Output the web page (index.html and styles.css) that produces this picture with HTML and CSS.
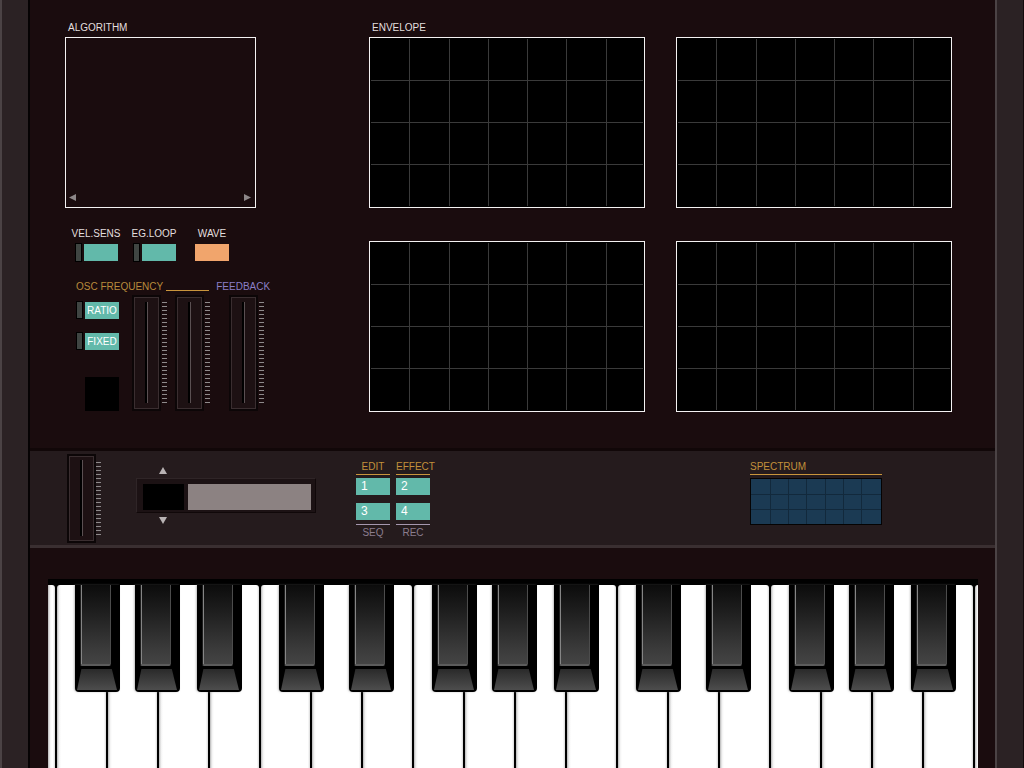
FILE: index.html
```html
<!DOCTYPE html>
<html>
<head>
<meta charset="utf-8">
<title>Synth</title>
<link rel="stylesheet" href="styles.css">
</head>
<body>
<div class="app">
  <div class="side-l"></div>
  <div class="main">
    <section class="top">
      <div class="left-col">
        <div class="cap box-label">ALGORITHM</div>
        <div class="algo">
          <svg class="tri" width="7" height="7" viewBox="0 0 7 7"><polygon points="7,0 7,7 0,3.5"/></svg>
          <svg class="tri" width="7" height="7" viewBox="0 0 7 7"><polygon points="0,0 0,7 7,3.5"/></svg>
        </div>
        <div class="toggles">
          <div class="unit"><div class="cap">VEL.SENS</div><div class="tg"><span class="ind"></span><span class="pad teal"></span></div></div>
          <div class="unit"><div class="cap">EG.LOOP</div><div class="tg"><span class="ind"></span><span class="pad teal"></span></div></div>
          <div class="unit"><div class="cap">WAVE</div><div class="tg"><span class="pad orange"></span></div></div>
        </div>
        <div class="osc-head"><span class="gold">OSC FREQUENCY</span><span class="gold-line"></span><span class="purple">FEEDBACK</span></div>
        <div class="osc-body">
          <div class="btncol">
            <div class="tg ratio"><span class="ind"></span><span class="pad teal">RATIO</span></div>
            <div class="tg fixed"><span class="ind"></span><span class="pad teal">FIXED</span></div>
            <div class="blk"></div>
          </div>
          <div class="slider s1"><div class="frame"><span class="slot"></span></div><div class="ticks"></div></div>
          <div class="slider s2"><div class="frame"><span class="slot"></span></div><div class="ticks"></div></div>
          <div class="slider s3"><div class="frame"><span class="slot"></span></div><div class="ticks"></div></div>
        </div>
      </div>
      <div class="env-col">
        <div class="cap box-label">ENVELOPE</div>
        <div class="env-grid">
          <div class="env"><svg class="grid" width="274" height="169" viewBox="0 0 274 169"><path d="M39.5 1V168M79.5 1V168M118.5 1V168M157.5 1V168M196.5 1V168M236.5 1V168M1 42.5H273M1 84.5H273M1 126.5H273"/></svg></div>
          <div class="env"><svg class="grid" width="274" height="169" viewBox="0 0 274 169"><path d="M39.5 1V168M79.5 1V168M118.5 1V168M157.5 1V168M196.5 1V168M236.5 1V168M1 42.5H273M1 84.5H273M1 126.5H273"/></svg></div>
          <div class="env"><svg class="grid" width="274" height="169" viewBox="0 0 274 169"><path d="M39.5 1V168M79.5 1V168M118.5 1V168M157.5 1V168M196.5 1V168M236.5 1V168M1 42.5H273M1 84.5H273M1 126.5H273"/></svg></div>
          <div class="env"><svg class="grid" width="274" height="169" viewBox="0 0 274 169"><path d="M39.5 1V168M79.5 1V168M118.5 1V168M157.5 1V168M196.5 1V168M236.5 1V168M1 42.5H273M1 84.5H273M1 126.5H273"/></svg></div>
        </div>
      </div>
    </section>
    <div class="sep-dark"></div>
    <section class="panel">
      <div class="slider pslider"><div class="frame"><span class="slot"></span></div><div class="ticks"></div></div>
      <div class="dgroup">
        <svg class="arrow up" width="8" height="7" viewBox="0 0 8 7"><polygon points="4,0 8,7 0,7"/></svg>
        <div class="disp"><div class="d-black"></div><div class="d-gray"></div></div>
        <svg class="arrow down" width="8" height="7" viewBox="0 0 8 7"><polygon points="0,0 8,0 4,7"/></svg>
      </div>
      <div class="egroup">
        <div class="ecol">
          <div class="cap t-gold">EDIT</div>
          <div class="ln-gold"></div>
          <div class="nbtn">1</div>
          <div class="nbtn">3</div>
          <div class="ln-lav"></div>
          <div class="cap t-lav">SEQ</div>
        </div>
        <div class="ecol">
          <div class="cap t-gold">EFFECT</div>
          <div class="ln-gold"></div>
          <div class="nbtn">2</div>
          <div class="nbtn">4</div>
          <div class="ln-lav"></div>
          <div class="cap t-lav">REC</div>
        </div>
      </div>
      <div class="spec">
        <div class="cap t-gold spec-title">SPECTRUM</div>
        <div class="ln-gold"></div>
        <div class="spec-box"><svg class="grid" width="130" height="45" viewBox="0 0 130 45"><path d="M19.5 0V45M37.5 0V45M55.5 0V45M74.5 0V45M92.5 0V45M110.5 0V45M0 15.5H130M0 30.5H130"/></svg></div>
      </div>
    </section>
    <div class="sep-light"></div>
    <section class="kb-area">
      <div class="keyboard">
        <div class="wk p1"></div>
        <div class="wk"></div><div class="wk"></div><div class="wk"></div><div class="wk"></div>
        <div class="wk"></div><div class="wk"></div><div class="wk"></div>
        <div class="wk"></div><div class="wk"></div><div class="wk"></div><div class="wk"></div>
        <div class="wk"></div><div class="wk"></div><div class="wk"></div>
        <div class="wk"></div><div class="wk"></div><div class="wk"></div><div class="wk"></div>
        <div class="wk p2"></div>

        <div class="bk" style="left:27px"><div class="bk-body"></div><div class="bk-front"></div></div>
        <div class="bk" style="left:87px"><div class="bk-body"></div><div class="bk-front"></div></div>
        <div class="bk" style="left:149px"><div class="bk-body"></div><div class="bk-front"></div></div>
        <div class="bk" style="left:231px"><div class="bk-body"></div><div class="bk-front"></div></div>
        <div class="bk" style="left:301px"><div class="bk-body"></div><div class="bk-front"></div></div>
        <div class="bk" style="left:384px"><div class="bk-body"></div><div class="bk-front"></div></div>
        <div class="bk" style="left:444px"><div class="bk-body"></div><div class="bk-front"></div></div>
        <div class="bk" style="left:506px"><div class="bk-body"></div><div class="bk-front"></div></div>
        <div class="bk" style="left:588px"><div class="bk-body"></div><div class="bk-front"></div></div>
        <div class="bk" style="left:658px"><div class="bk-body"></div><div class="bk-front"></div></div>
        <div class="bk" style="left:741px"><div class="bk-body"></div><div class="bk-front"></div></div>
        <div class="bk" style="left:801px"><div class="bk-body"></div><div class="bk-front"></div></div>
        <div class="bk" style="left:863px"><div class="bk-body"></div><div class="bk-front"></div></div>
      </div>
    </section>
  </div>
  <div class="side-r"></div>
</div>
</body>
</html>
```

FILE: styles.css
```css
html, body {
  margin: 0;
  padding: 0;
}
body {
  background: #1a0c0e;
  font-family: "Liberation Sans", Arial, sans-serif;
}
.app {
  display: flex;
  width: 1024px;
  height: 768px;
  overflow: hidden;
}
.side-l {
  width: 30px;
  flex: none;
  box-sizing: border-box;
  border-left: 2px solid #4b4345;
  border-right: 2px solid #050203;
  background: #2b2224;
}
.side-r {
  width: 29px;
  flex: none;
  box-sizing: border-box;
  border-left: 2px solid #4b4345;
  border-right: 1px solid #120a0b;
  background: #2b2224;
}
.main {
  width: 965px;
  flex: none;
  display: flex;
  flex-direction: column;
  background: #1a0c0e;
}

/* ---------- top section ---------- */
.top {
  height: 448px;
  box-sizing: border-box;
  padding: 22px 0 0 35px;
  display: flex;
}
.left-col {
  width: 304px;
  flex: none;
}
.cap {
  font-size: 10px;
  line-height: 12px;
  color: #e3dfdf;
  white-space: nowrap;
}
.box-label {
  padding-left: 3px;
  margin-bottom: 3px;
}
.algo {
  width: 191px;
  height: 171px;
  box-sizing: border-box;
  border: 1px solid #f4f2f2;
  display: flex;
  justify-content: space-between;
  align-items: flex-end;
  padding: 0 4px 6px 3px;
}
.tri {
  display: block;
  fill: #8d8788;
}

.toggles {
  display: flex;
  gap: 10px;
  margin-top: 20px;
  padding-left: 7px;
}
.unit {
  width: 48px;
  display: flex;
  flex-direction: column;
  align-items: center;
  gap: 3px;
}
.tg {
  display: flex;
  align-items: center;
  gap: 2px;
  min-height: 19px;
}
.ind {
  width: 7px;
  height: 19px;
  box-sizing: border-box;
  border: 1px solid #000;
  background: #3f4542;
}
.pad {
  width: 34px;
  height: 17px;
  font-size: 10px;
  line-height: 17px;
  color: #fff;
  text-align: center;
}
.teal { background: #62b9aa; }
.orange { background: #f1a56c; }

.osc-head {
  display: flex;
  margin-top: 19px;
  padding-left: 11px;
  font-size: 10px;
  line-height: 12px;
  white-space: nowrap;
}
.gold { color: #b88a3c; }
.gold-line {
  width: 43px;
  height: 1px;
  background: #c9953c;
  margin: 9px 0 0 3px;
}
.purple {
  color: #8b7fc6;
  margin-left: 7px;
}
.osc-body {
  display: flex;
  align-items: flex-start;
  margin-top: 2px;
  padding-left: 11px;
}
.btncol {
  width: 43px;
  flex: none;
  display: flex;
  flex-direction: column;
}
.btncol .tg { min-height: 18px; }
.btncol .ind { height: 18px; }
.ratio { margin-top: 6px; }
.fixed { margin-top: 13px; }
.blk {
  width: 34px;
  height: 34px;
  background: #000;
  margin: 27px 0 0 9px;
}

.slider {
  display: flex;
  align-items: flex-start;
  flex: none;
}
.s1 { margin-left: 13px; }
.s2 { margin-left: 8px; }
.s3 { margin-left: 19px; }
.frame {
  width: 29px;
  height: 116px;
  box-sizing: border-box;
  border: 2px solid #0c0607;
  box-shadow: inset 0 0 0 1px #3a2e30;
  background: #1d1113;
  display: flex;
  justify-content: center;
}
.slot {
  width: 3px;
  height: 101px;
  margin-top: 5px;
  background: linear-gradient(to right, #000 0, #000 2px, #5a5052 2px);
}
.ticks {
  width: 5px;
  height: 101px;
  margin: 7px 0 0 1px;
  background: repeating-linear-gradient(to bottom, #8e8a8b 0, #8e8a8b 1px, transparent 1px, transparent 4px);
}

.env-col {
  flex: none;
}
.env-grid {
  display: grid;
  grid-template-columns: 276px 276px;
  column-gap: 31px;
  row-gap: 33px;
}
.env {
  width: 276px;
  height: 171px;
  box-sizing: border-box;
  border: 1px solid #f4f2f2;
  background: #000;
}
.grid {
  display: block;
}
.env .grid path {
  stroke: #3a3a3a;
  stroke-width: 1;
  fill: none;
  shape-rendering: crispEdges;
}

/* ---------- middle panel ---------- */
.sep-dark {
  height: 3px;
  background: #110708;
}
.panel {
  height: 94px;
  flex: none;
  background: #251b1d;
  display: flex;
  align-items: flex-start;
  padding-left: 37px;
}
.sep-light {
  height: 3px;
  background: #3a2f31;
}
.pslider { margin-top: 3px; }
.pslider .frame { height: 89px; }
.pslider .slot {
  height: 76px;
  margin-top: 4px;
}
.pslider .ticks {
  height: 73px;
  margin: 8px 0 0 0;
}
.dgroup {
  margin-left: 35px;
  display: flex;
  flex-direction: column;
  flex: none;
}
.arrow {
  display: block;
  fill: #b9b3b4;
  margin-left: 23px;
}
.arrow.up { margin-top: 16px; }
.arrow.down { margin-top: 4px; }
.disp {
  margin-top: 4px;
  width: 180px;
  height: 35px;
  box-sizing: border-box;
  border: 1px solid #100809;
  border-top-color: #2f2527;
  border-left-color: #2f2527;
  background: #1c1214;
  padding: 5px 0 0 6px;
  display: flex;
  gap: 4px;
}
.d-black {
  width: 41px;
  height: 26px;
  background: #000;
}
.d-gray {
  width: 123px;
  height: 26px;
  background: #8c8282;
}
.egroup {
  margin-left: 40px;
  margin-top: 10px;
  display: flex;
  gap: 6px;
  flex: none;
}
.ecol {
  width: 34px;
  display: flex;
  flex-direction: column;
}
.t-gold {
  color: #c2903b;
  text-align: center;
}
.ln-gold {
  height: 1px;
  background: #c9953c;
  margin-top: 1px;
}
.nbtn {
  height: 17px;
  background: #62b9aa;
  color: #fff;
  font-size: 12px;
  line-height: 17px;
  padding-left: 5px;
  margin-top: 3px;
}
.nbtn + .nbtn { margin-top: 8px; }
.ln-lav {
  height: 1px;
  background: #a597ae;
  margin-top: 4px;
}
.t-lav {
  margin-top: 2px;
  text-align: center;
  color: #8b7d8e;
}
.spec {
  margin-left: 320px;
  margin-top: 10px;
  width: 132px;
  flex: none;
}
.spec-title { text-align: left; }
.spec-box {
  margin-top: 3px;
  height: 47px;
  box-sizing: border-box;
  border: 1px solid #050303;
  background: #1b3a53;
}
.spec-box .grid path {
  stroke: #12293c;
  stroke-width: 1;
  fill: none;
  shape-rendering: crispEdges;
}

/* ---------- keyboard ---------- */
.kb-area {
  flex: 1;
  padding: 31px 0 0 18px;
  background: #1a0c0e;
}
.keyboard {
  position: relative;
  width: 930px;
  height: 189px;
  box-sizing: border-box;
  padding-top: 6px;
  background: #000;
  display: flex;
  gap: 2px;
  overflow: hidden;
}
.wk {
  width: 49px;
  height: 183px;
  flex: none;
  border-radius: 3px 3px 0 0;
  background: linear-gradient(to right, #b5b5b5 0, #f2f2f2 2px, #fff 4px, #fff calc(100% - 2px), #d8d8d8 100%);
}
.wk.p1 { width: 7px; border-radius: 0 3px 0 0; }
.wk.p2 { width: 3px; border-radius: 3px 0 0 0; }
.bk {
  position: absolute;
  top: 6px;
  width: 45px;
  height: 107px;
  background: #000;
  border-radius: 0 0 4px 4px;
  box-shadow: -1px 0 2px rgba(140, 140, 140, 0.55);
  display: flex;
  flex-direction: column;
}
.bk-body {
  margin-left: 5px;
  width: 31px;
  height: 81px;
  box-sizing: border-box;
  border-left: 1px solid #1e1e1e;
  border-right: 1px solid #4c4c4c;
  border-bottom: 2px solid #5c5c5c;
  border-radius: 0 0 2px 2px;
  box-shadow: inset 1px 0 0 #858585;
  background: linear-gradient(to bottom, #0c0c0c 0, #1f1f1f 35%, #3a3a3a 80%, #444 100%);
}
.bk-front {
  margin: 3px 0 0 2px;
  width: 40px;
  height: 21px;
  background: linear-gradient(to bottom, #2a2a2a, #4d4d4d);
  clip-path: polygon(11% 0, 87% 0, 100% 100%, 0 100%);
}
```
